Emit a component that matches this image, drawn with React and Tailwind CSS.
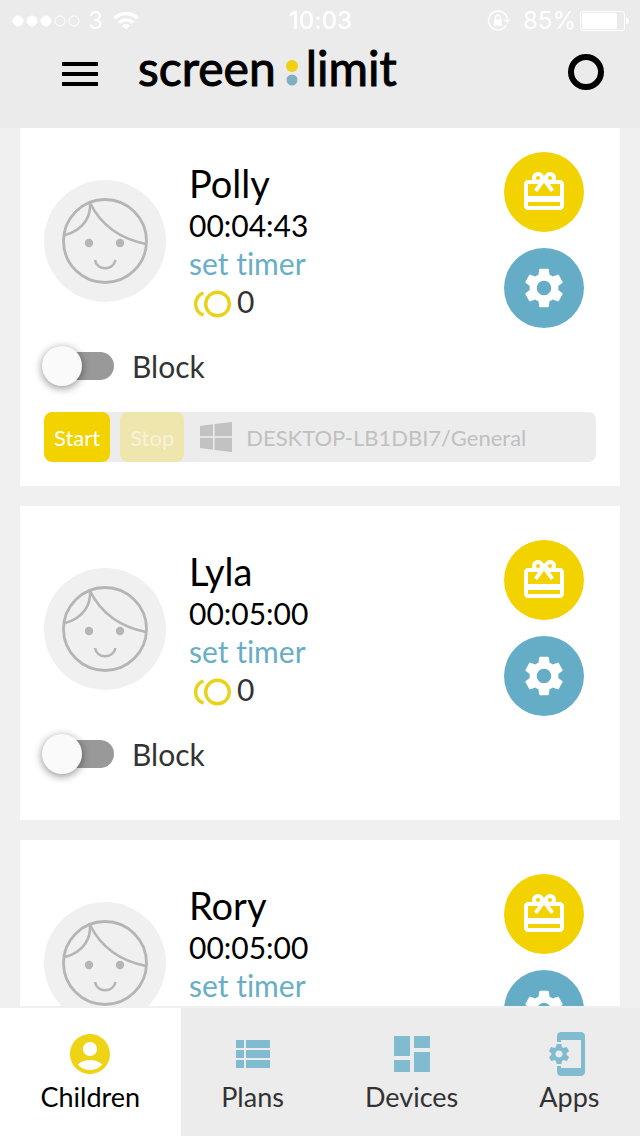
import React from "react";
import {
  MdAccountCircle,
  MdMenu,
  MdPhonelinkSetup,
  MdRedeem,
  MdSettings,
} from "react-icons/md";

const kids = [
  {
    id: "polly",
    name: "Polly",
    time: "00:04:43",
    coins: 0,
    device: "DESKTOP-LB1DBI7/General",
  },
  { id: "lyla", name: "Lyla", time: "00:05:00", coins: 0 },
  { id: "rory", name: "Rory", time: "00:05:00", coins: 0 },
];

function WifiIcon() {
  return (
    <svg viewBox="0 0 26 18" className="h-[18px] w-[26px]" fill="none" stroke="currentColor" aria-hidden="true">
      <path d="M1.5 6.2a16.5 16.5 0 0 1 23 0" strokeWidth="3.4" />
      <path d="M6 10.7a10 10 0 0 1 14 0" strokeWidth="3.2" />
      <path d="M13 17.5 9 13.4a5.8 5.8 0 0 1 8 0z" fill="currentColor" stroke="none" />
    </svg>
  );
}

function RotationLockIcon() {
  return (
    <svg viewBox="0 0 24 22" className="h-[22px] w-6" fill="none" stroke="currentColor" aria-hidden="true">
      <path d="M19.3 15.2A9.5 9.5 0 1 1 20.4 9" strokeWidth="1.5" />
      <path d="M17.5 9.4h6l-3 4z" fill="currentColor" stroke="none" />
      <rect x="7" y="9.5" width="8" height="6.2" fill="currentColor" stroke="none" />
      <path d="M8.6 10V7.6a2.4 2.4 0 0 1 4.8 0V10" strokeWidth="1.4" />
    </svg>
  );
}

function BatteryIcon() {
  return (
    <svg viewBox="0 0 49 20" className="h-5 w-[49px]" fill="none" aria-hidden="true">
      <rect x="0.5" y="0.5" width="44" height="19" rx="2.5" stroke="currentColor" />
      <rect x="2" y="2" width="35" height="16" rx="1" fill="currentColor" />
      <path d="M46 6.5c2 .5 3 1.7 3 3.5s-1 3-3 3.5z" fill="currentColor" />
    </svg>
  );
}

function StatusBar() {
  return (
    <div className="grid h-10 grid-cols-[1fr_auto_1fr] items-center pl-3 pr-[11px] pt-0.5 font-['Inter',sans-serif] text-2xl text-white">
      <div className="flex items-center gap-2">
        <svg viewBox="0 0 68 12" className="h-3 w-[68px]" fill="currentColor" stroke="currentColor" aria-hidden="true">
          <circle cx="6" cy="6" r="5" />
          <circle cx="20" cy="6" r="5" />
          <circle cx="34" cy="6" r="5" />
          <circle cx="48" cy="6" r="5" fill="none" />
          <circle cx="62" cy="6" r="5" fill="none" />
        </svg>
        <span>3</span>
        <span className="ml-0.5">
          <WifiIcon />
        </span>
      </div>
      <span className="font-medium">10:03</span>
      <div className="flex items-center justify-end">
        <RotationLockIcon />
        <span className="ml-3 mr-1">85%</span>
        <BatteryIcon />
      </div>
    </div>
  );
}

function Header() {
  return (
    <header className="shrink-0 bg-[#ebebeb]">
      <StatusBar />
      <div className="flex items-start pb-[30px] pl-14 pr-9 pt-2.5">
        <button type="button" aria-label="Menu" className="text-black">
          <MdMenu size={48} />
        </button>
        <h1 className="ml-[34px] flex items-center text-[48px] leading-9 text-black [-webkit-text-stroke:1px_black]">
          <span>screen</span>
          <svg viewBox="0 0 12 36" className="ml-2.5 mr-2 h-9 w-3" aria-hidden="true">
            <circle cx="6" cy="16" r="6" fill="#f2cf10" />
            <circle cx="6" cy="30" r="5.5" fill="#7fb0c2" />
          </svg>
          <span>limit</span>
        </h1>
        <button
          type="button"
          aria-label="Refresh"
          className="ml-auto mt-1 size-9 rounded-full border-[6px] border-black"
        />
      </div>
    </header>
  );
}

function Avatar() {
  return (
    <svg viewBox="0 0 122 122" className="mt-7 size-[122px] shrink-0" fill="none" stroke="#b5b5b5" strokeWidth="2.6" aria-hidden="true">
      <circle cx="61" cy="61" r="61" fill="#f0f0f0" stroke="none" />
      <circle cx="61" cy="61" r="41.5" strokeWidth="2.8" />
      <path d="M46 23c9 18 26 35 56 41" />
      <path d="M46 23c1 13-6 27-25 32" />
      <path d="M51 80c2 11 18 11 20.5 0" />
      <circle cx="45" cy="63" r="4.2" fill="#b5b5b5" stroke="none" />
      <circle cx="76" cy="63" r="4.2" fill="#b5b5b5" stroke="none" />
    </svg>
  );
}

function CoinsIcon() {
  return (
    <svg viewBox="0 -6 38 34" className="h-[34px] w-[38px]" fill="none" stroke="#e8d21a" strokeWidth="3.4" aria-hidden="true">
      <circle cx="24.5" cy="14" r="11.8" />
      <path d="M10.5 2.8C0 7 0 21 10.5 25.2" />
    </svg>
  );
}

function WindowsIcon() {
  return (
    <svg viewBox="0 0 32 30" className="h-[30px] w-8 shrink-0" fill="#c2c2c2" aria-hidden="true">
      <path d="M0 4 13 2.3V14.3H0zM14.5 2.1 32 0v14.3H14.5zM0 15.8h13v12L0 26zM14.5 15.8H32V30l-17.5-2z" />
    </svg>
  );
}

function Session({ device }) {
  return (
    <div className="mt-1 flex h-[50px] items-center overflow-hidden rounded-lg bg-[#ececec] text-[22px]">
      <button type="button" className="h-full rounded-lg bg-[#f2d300] px-2.5 text-white">
        Start
      </button>
      <button type="button" disabled className="ml-2.5 h-full rounded-lg bg-[#efe6ae] px-2.5 text-[#f6f2dc]">
        Stop
      </button>
      <span className="ml-4 flex items-center gap-3.5 text-[#c0c0c0]">
        <WindowsIcon />
        {device}
      </span>
    </div>
  );
}

function ChildCard({ child }) {
  const switchId = `block-${child.id}`;
  return (
    <article className="bg-white px-6 pb-6 pt-[34px]">
      <div className="flex h-44">
        <Avatar />
        <div className="ml-[23px] mt-2.5">
          <h2 className="text-[38px] leading-[42px] text-black">{child.name}</h2>
          <p className="mt-0.5 text-[30px] leading-[38px] text-black">{child.time}</p>
          <a href="#timer" className="block text-[30px] leading-[38px] text-[#68aec6]">
            set timer
          </a>
          <p className="flex items-center gap-1.5 pl-1 text-[30px] leading-[38px] text-[#333]">
            <CoinsIcon />
            {child.coins}
          </p>
        </div>
        <div className="ml-auto mr-3 flex flex-col gap-4">
          <button
            type="button"
            aria-label={`Reward ${child.name}`}
            className="flex size-20 items-center justify-center rounded-full bg-[#f2d300] text-white"
          >
            <MdRedeem size={48} />
          </button>
          <button
            type="button"
            aria-label={`Settings for ${child.name}`}
            className="flex size-20 items-center justify-center rounded-full bg-[#65adc7] text-white"
          >
            <MdSettings size={48} />
          </button>
        </div>
      </div>
      <div className="pb-[22px] pt-[18px]">
        <label htmlFor={switchId} className="flex h-10 w-fit items-center text-[30px] text-[#333]">
          <input id={switchId} type="checkbox" role="switch" className="peer sr-only" />
          <span className="flex h-7 w-[70px] items-center rounded-full bg-[#999] peer-checked:justify-end peer-checked:bg-[#65adc7]">
            <span className="-mx-0.5 size-10 shrink-0 rounded-full bg-[#fafafa] shadow-[0_2px_8px_rgba(0,0,0,0.45)]" />
          </span>
          <span className="ml-[18px]">Block</span>
        </label>
      </div>
      {child.device && <Session device={child.device} />}
    </article>
  );
}

function ListIcon() {
  return (
    <svg viewBox="0 0 24 24" className="size-12" fill="currentColor" aria-hidden="true">
      <path d="M3.5 5h4v4h-4zM8.5 5h12v4h-12zM3.5 10h4v4h-4zM8.5 10h12v4h-12zM3.5 15h4v4h-4zM8.5 15h12v4h-12z" />
    </svg>
  );
}

function DashboardIcon() {
  return (
    <svg viewBox="0 0 24 24" className="size-12" fill="currentColor" aria-hidden="true">
      <path d="M3 13h8V3H3zM3 21h8v-6H3zM13 21h8V11h-8zM13 3v6h8V3z" />
    </svg>
  );
}

const tabs = [
  { label: "Children", icon: <MdAccountCircle size={48} />, active: true },
  { label: "Plans", icon: <ListIcon /> },
  { label: "Devices", icon: <DashboardIcon /> },
  { label: "Apps", icon: <MdPhonelinkSetup size={48} /> },
];

function TabBar() {
  return (
    <nav className="flex h-[130px] shrink-0 border-t-2 border-[#f0f0f0] bg-[#ececec]">
      {tabs.map((tab) => (
        <a
          key={tab.label}
          href={`#${tab.label.toLowerCase()}`}
          aria-current={tab.active ? "page" : undefined}
          className={
            tab.active
              ? "flex flex-auto flex-col items-center bg-white px-9 pt-[22px] text-black"
              : "flex flex-auto flex-col items-center px-9 pt-[22px] text-[#333]"
          }
        >
          <span className={tab.active ? "text-[#efd416]" : "text-[#80bbd0]"}>{tab.icon}</span>
          <span className="text-[27px] leading-[38px]">{tab.label}</span>
        </a>
      ))}
    </nav>
  );
}

export default function App() {
  return (
    <div className="flex h-screen flex-col bg-[#f0f0f0] font-['Lato',sans-serif] [font-variant-ligatures:none]">
      <Header />
      <main className="min-h-0 flex-1 overflow-y-auto px-5 [scrollbar-width:none]">
        <div className="-mt-2.5 flex flex-col gap-5">
          {kids.map((child) => (
            <ChildCard key={child.id} child={child} />
          ))}
        </div>
      </main>
      <TabBar />
    </div>
  );
}
